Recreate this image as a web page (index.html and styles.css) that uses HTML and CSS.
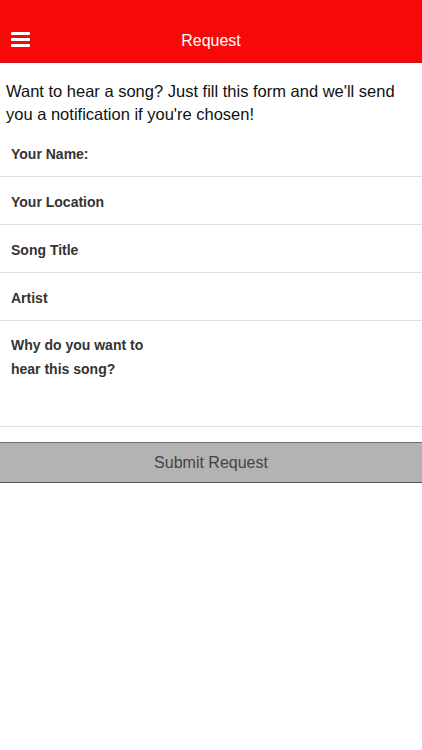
FILE: index.html
```html
<!DOCTYPE html>
<html>
<head>
    <title>Request</title>
    <link rel="stylesheet" href="styles.css">
</head>
<body>
    <div class="top-bar">
        <button class="menu-button" aria-label="Menu">
            <svg width="19" height="15" viewBox="0 0 19 15">
                <rect x="0" y="0" width="19" height="3" rx="1" fill="#fff"/>
                <rect x="0" y="6" width="19" height="3" rx="1" fill="#fff"/>
                <rect x="0" y="12" width="19" height="3" rx="1" fill="#fff"/>
            </svg>
        </button>
        <div class="top-title">Request</div>
        <div class="top-spacer"></div>
    </div>

    <p class="intro">Want to hear a song? Just fill this form and we'll send you a notification if you're chosen!</p>

    <form class="request-form" onsubmit="return false;">
        <label class="form-row">
            <span class="form-label">Your Name:</span>
            <input type="text" class="form-input">
        </label>
        <label class="form-row">
            <span class="form-label">Your Location</span>
            <input type="text" class="form-input">
        </label>
        <label class="form-row">
            <span class="form-label">Song Title</span>
            <input type="text" class="form-input">
        </label>
        <label class="form-row">
            <span class="form-label">Artist</span>
            <input type="text" class="form-input">
        </label>
        <label class="form-row form-row-tall">
            <span class="form-label">Why do you want to hear this song?</span>
            <textarea class="form-input form-textarea"></textarea>
        </label>

        <button type="submit" class="submit-button">Submit Request</button>
    </form>
</body>
</html>
```

FILE: styles.css
```css
body {
    font-family: "Liberation Sans", Arial, sans-serif;
    margin: 0;
    padding: 0;
    background: #fff;
    color: #111;
}

.top-bar {
    height: 63px;
    background: #f80909;
    border-bottom: 1px solid #c8141a;
    display: flex;
    align-items: center;
    padding-top: 1px;
    box-sizing: border-box;
}

.menu-button {
    width: 60px;
    height: 40px;
    background: none;
    border: none;
    padding: 0 0 0 11px;
    margin-top: 16px;
    display: flex;
    align-items: center;
    cursor: pointer;
}

.top-title {
    flex-grow: 1;
    text-align: center;
    color: #fff;
    font-size: 16px;
    margin-top: 18px;
}

.top-spacer {
    width: 60px;
}

.intro {
    margin: 0;
    padding: 17px 6px 3px 6px;
    font-size: 16.5px;
    line-height: 23px;
}

.request-form {
    display: flex;
    flex-direction: column;
}

.form-row {
    display: flex;
    height: 48px;
    box-sizing: border-box;
    padding: 16px 11px 0 11px;
    border-bottom: 1px solid #dedede;
}

.form-row-tall {
    height: 106px;
    padding-top: 12px;
}

.form-label {
    width: 150px;
    flex-shrink: 0;
    font-size: 14px;
    font-weight: bold;
    line-height: 18px;
    color: #333;
}

.form-row-tall .form-label {
    line-height: 24px;
}

.form-input {
    flex-grow: 1;
    border: none;
    outline: none;
    font-family: inherit;
    font-size: 14px;
    height: 18px;
    padding: 0;
    background: transparent;
}

.form-textarea {
    height: 80px;
    resize: none;
}

.submit-button {
    margin-top: 15px;
    height: 41px;
    background: #b3b3b3;
    border: none;
    border-top: 1px solid #6e6e6e;
    border-bottom: 1px solid #555;
    font-family: inherit;
    font-size: 16px;
    color: #444;
    cursor: pointer;
}
```
